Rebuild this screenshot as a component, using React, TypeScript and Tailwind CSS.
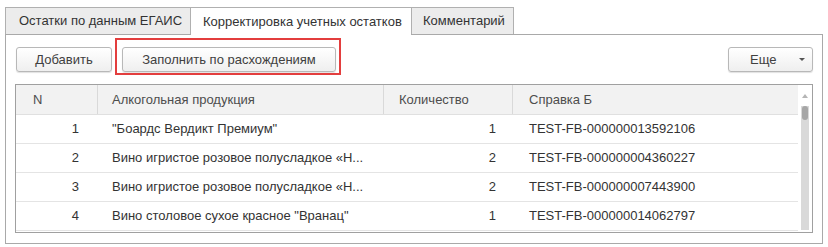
import React from 'react';

const rows = [
  { n: 1, name: '"Боардс Вердикт Премиум"', qty: 1, ref: 'TEST-FB-000000013592106' },
  { n: 2, name: 'Вино игристое розовое полусладкое «Н...', qty: 2, ref: 'TEST-FB-000000004360227' },
  { n: 3, name: 'Вино игристое розовое полусладкое «Н...', qty: 2, ref: 'TEST-FB-000000007443900' },
  { n: 4, name: 'Вино столовое сухое красное "Вранац"', qty: 1, ref: 'TEST-FB-000000014062797' },
];

const btn =
  'h-[25px] rounded-[3px] border border-[#b8b8b8] bg-gradient-to-b from-white to-[#efefef] shadow-[0_1px_1px_rgba(0,0,0,0.12)] text-[#404040] text-[13px]';

export default function App() {
  return (
    <div
      className="w-[828px] h-[247px] bg-white pt-[7px] px-[5px] text-[13px] overflow-hidden"
      style={{ fontFamily: '"Liberation Sans", Arial, sans-serif' }}
    >
      {/* Tabs */}
      <div className="flex h-[27px] text-[13px]">
        <div className="w-[186px] border border-[#b0b0b0] border-b-0 bg-[#ececec] flex items-center pl-[13px] text-[#333]">
          Остатки по данным ЕГАИС
        </div>
        <div className="relative z-10 w-[220px] h-[28px] border-t border-[#b0b0b0] bg-white flex items-center pl-[12px] text-[#333]">
          Корректировка учетных остатков
        </div>
        <div className="w-[103px] border border-[#b0b0b0] border-b-0 bg-[#ececec] flex items-center pl-[11px] text-[#333]">
          Комментарий
        </div>
      </div>

      {/* Panel */}
      <div className="relative w-[818px] h-[210px] border border-[#a9a9a9] pt-[12px] pl-[9px] pr-[9px]">
        <div className="flex items-center">
          <button className={`${btn} w-[96px] ml-px`}>Добавить</button>
          <div className="relative ml-[10px]">
            <button className={`${btn} w-[214px]`}>Заполнить по расхождениям</button>
            <div className="absolute left-[-7px] top-[-9px] w-[226px] h-[37px] border-2 border-[#e33e3e] pointer-events-none" />
          </div>
          <button className={`${btn} w-[85px] ml-auto flex items-center pl-[21px] pr-[7px]`}>
            <span>Еще</span>
            <span className="ml-auto w-0 h-0 border-l-[3px] border-r-[3px] border-t-[3px] border-l-transparent border-r-transparent border-t-[#555]" />
          </button>
        </div>

        {/* Table */}
        <div className="mt-[12px] h-[149px] border border-[#a0a0a0] flex overflow-hidden">
          <div className="flex-1">
            <div className="flex h-[30px] bg-[#f2f2f2] text-[#4d4d4d] border-b border-[#e0e0e0]">
              <div className="w-[82px] border-r border-[#d9d9d9] flex items-center pl-[17px]">N</div>
              <div className="w-[286px] border-r border-[#d9d9d9] flex items-center pl-[14px]">Алкогольная продукция</div>
              <div className="w-[129px] border-r border-[#d9d9d9] flex items-center pl-[15px]">Количество</div>
              <div className="flex-1 flex items-center pl-[16px]">Справка Б</div>
            </div>
            {rows.map((r) => (
              <div key={r.n} className="flex h-[29px] border-b border-[#e4e4e4] text-[#333]">
                <div className="w-[82px] flex items-center justify-end pr-[19px]">{r.n}</div>
                <div className="w-[286px] flex items-center pl-[14px]">{r.name}</div>
                <div className="w-[129px] flex items-center justify-end pr-[17px]">{r.qty}</div>
                <div className="flex-1 flex items-center pl-[16px]">{r.ref}</div>
              </div>
            ))}
          </div>
          {/* Scrollbar */}
          <div className="w-[14px] flex flex-col items-center pt-[9px]">
            <span className="w-0 h-0 border-l-[3px] border-r-[3px] border-b-[4px] border-l-transparent border-r-transparent border-b-[#b5b5b5]" />
            <div className="mt-[8px] w-[8px] flex-1 bg-[#d9d9d9] mb-[2px] flex flex-col items-center">
              <div className="w-[6px] h-[14px] rounded-[3px] bg-[#a6a6a6]" />
            </div>
          </div>
        </div>
      </div>
    </div>
  );
}
